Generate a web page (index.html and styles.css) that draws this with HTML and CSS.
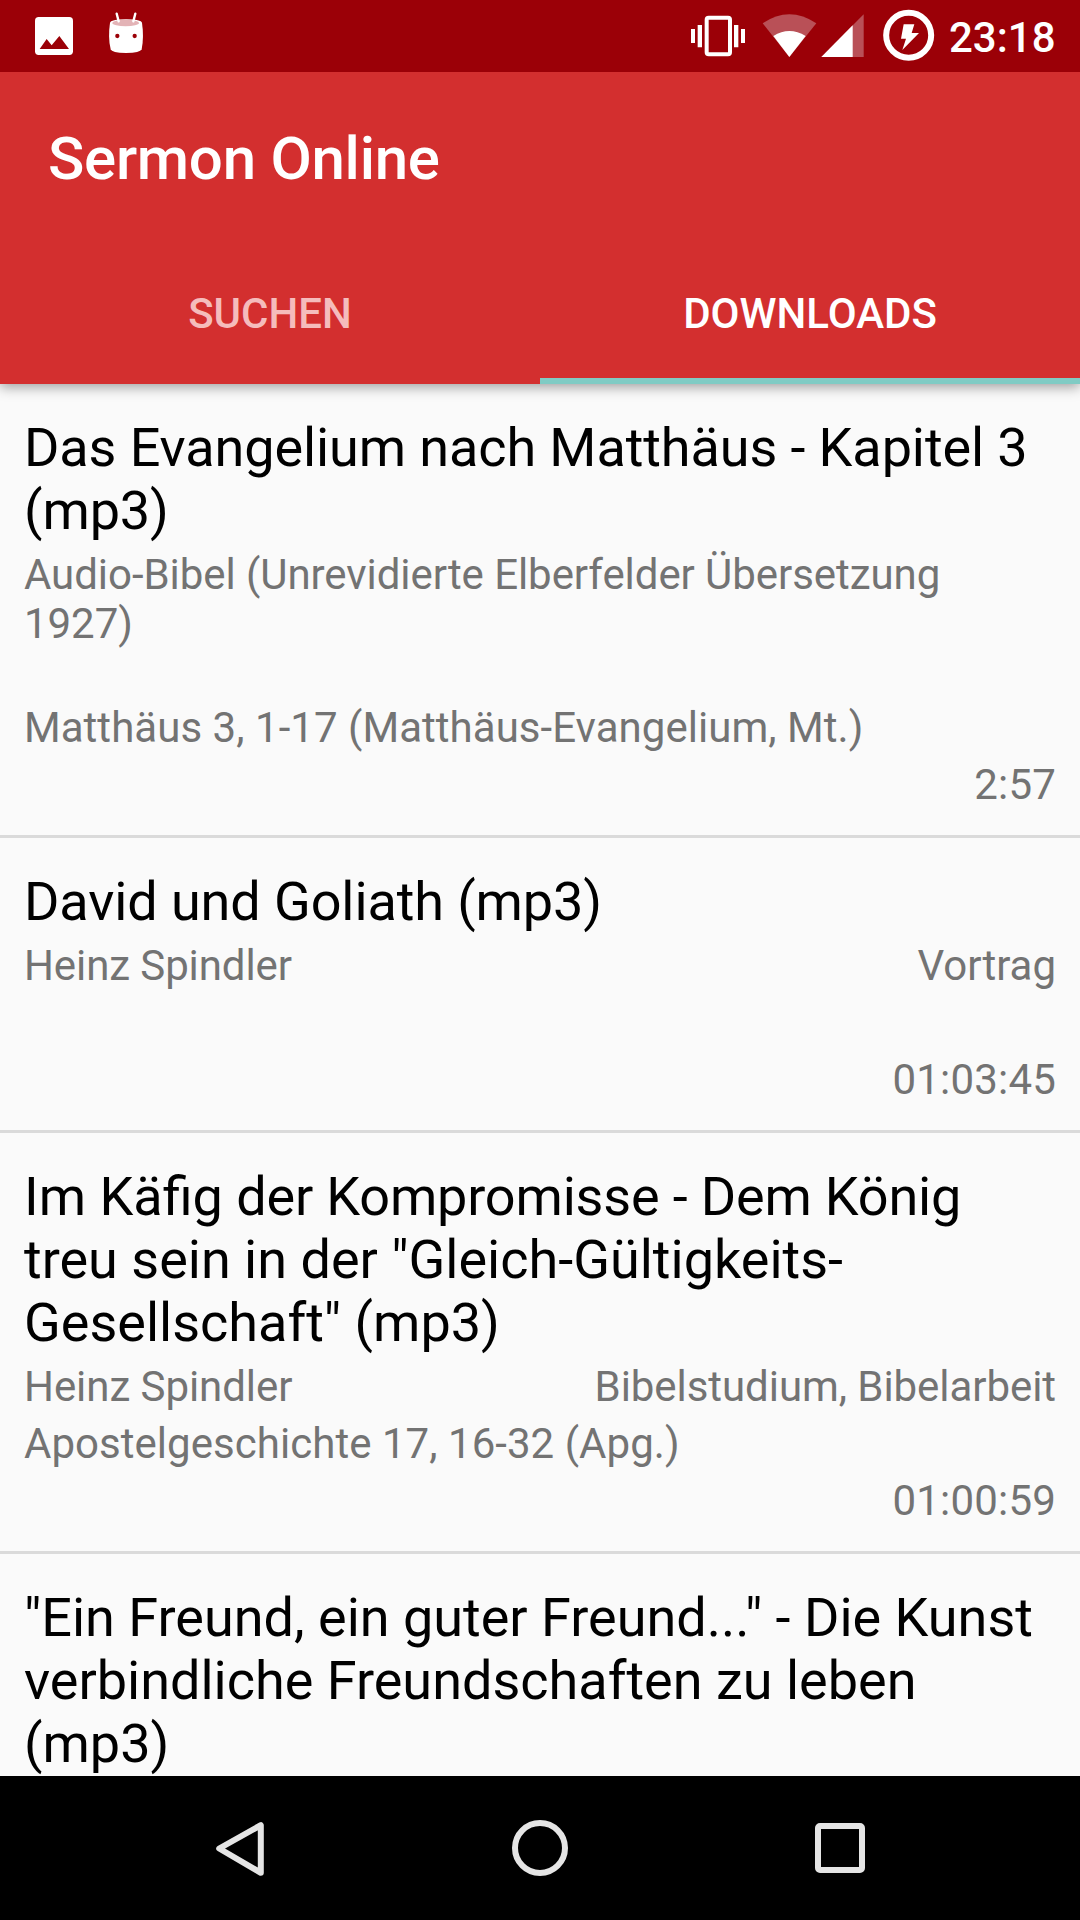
FILE: index.html
```html
<!DOCTYPE html>
<html lang="de">
<head>
<meta charset="utf-8">
<title>Sermon Online</title>
<link rel="stylesheet" href="styles.css">
</head>
<body>
<div class="screen">
  <div class="status-bar">
    <svg class="status-icons" width="160" height="72" viewBox="0 0 480 216">
      <rect x="105" y="51" width="114" height="114" rx="11" fill="#fff"/>
      <path d="M119 147L140 117L155 136L178 108L207 147Z" fill="#9b0007"/>
      <path d="M330 69C326 94 326 124 332 148Q335 159 378 159Q421 159 425 148C430 124 430 94 426 69Q424 58 378 58Q332 58 330 69Z" fill="#fff"/>
      <ellipse cx="377" cy="69" rx="40" ry="10" fill="#e3b3b6"/>
      <path d="M350 41L356 64M406 41L400 64" stroke="#fff" stroke-width="7" stroke-linecap="round"/>
      <circle cx="352" cy="108" r="6.5" fill="#9b0007"/>
      <circle cx="404" cy="108" r="6.5" fill="#9b0007"/>
    </svg>
    <svg class="status-icons" width="270" height="72" viewBox="0 0 810 216">
      <rect x="110" y="53" width="70" height="110" rx="6" fill="none" stroke="#fff" stroke-width="12"/>
      <path d="M63 87h12v42h-12zM83 75h13v67h-13zM192 75h13v67h-13zM213 87h12v42h-12z" fill="#fff"/>
      <path d="M278 70Q358 16 439 70L358 171Z" fill="#b95057"/>
      <path d="M310 108Q358 78 407 108L358 171Z" fill="#fff"/>
      <path d="M581 43V171H454Z" fill="#b95057"/>
      <path d="M548 76V171H454Z" fill="#fff"/>
      <circle cx="716" cy="106" r="67.500" fill="none" stroke="#fff" stroke-width="18"/>
      <path d="M701 73H733L725 99H747L697 150L708 116H693Z" fill="#fff"/>
    </svg>
    <span class="clock">23:18</span>
  </div>

  <header class="app-bar">
    <h1 class="app-title">Sermon Online</h1>
    <nav class="tabs">
      <div class="tab">SUCHEN</div>
      <div class="tab tab-active">DOWNLOADS</div>
    </nav>
  </header>

  <main class="list">
    <article class="item">
      <h2 class="title tight">Das Evangelium nach Matthäus - Kapitel 3 (mp3)</h2>
      <div class="row row-tall tight"><span>Audio-Bibel (Unrevidierte Elberfelder Übersetzung 1927)</span></div>
      <div class="row reference">Matthäus 3, 1-17 (Matthäus-Evangelium, Mt.)</div>
      <div class="row time">2:57</div>
    </article>
    <article class="item">
      <h2 class="title tight">David und Goliath (mp3)</h2>
      <div class="row"><span class="tight">Heinz Spindler</span><span>Vortrag</span></div>
      <div class="row"></div>
      <div class="row time">01:03:45</div>
    </article>
    <article class="item">
      <h2 class="title">Im Käfig<span class="tighter"> der Kompromisse - Dem König</span> treu sein in der "Gleich-Gültigkeits-Gesellschaft" (mp3)</h2>
      <div class="row tight"><span>Heinz Spindler</span><span>Bibelstudium, Bibelarbeit</span></div>
      <div class="row reference">Apostelgeschichte 17, 16-32 (Apg.)</div>
      <div class="row time">01:00:59</div>
    </article>
    <article class="item">
      <h2 class="title">"Ein Freund, ein guter Freund..." - Die Kunst verbindliche Freundschaften zu leben (mp3)</h2>
    </article>
  </main>

  <footer class="nav-bar">
    <svg width="60" height="60" viewBox="0 0 60 60"><path d="M50.800 5.200V52.800L9.200 28.500Z"/></svg>
    <svg width="60" height="60" viewBox="0 0 60 60"><circle cx="30" cy="28" r="25"/></svg>
    <svg width="60" height="60" viewBox="0 0 60 60"><rect x="8" y="6" width="44" height="44" rx="2"/></svg>
  </footer>
</div>
</body>
</html>
```
FILE: styles.css
```css
* {
  box-sizing: border-box;
}

body {
  margin: 0;
  background: #fafafa;
  font-family: Roboto, sans-serif;
}

.screen {
  display: flex;
  flex-direction: column;
  width: 1080px;
  height: 1920px;
  overflow: hidden;
}

.status-bar {
  flex: none;
  position: relative;
  z-index: 2;
  display: flex;
  height: 72px;
  background: #9b0007;
}

.status-icons {
  flex: none;
}

.status-icons + .status-icons {
  margin-left: 510px;
}

.clock {
  margin-left: 9px;
  color: #fff;
  font-size: 42px;
  font-weight: 500;
  line-height: 75px;
}

.app-bar {
  flex: none;
  position: relative;
  z-index: 1;
  height: 312px;
  background: #d32f2f;
  color: #fff;
  box-shadow: 0 3px 12px rgba(0, 0, 0, 0.38);
}

.app-title {
  margin: 0;
  padding-left: 48px;
  font-size: 60px;
  font-weight: 500;
  letter-spacing: -0.27px;
  line-height: 174px;
  height: 168px;
}

.tabs {
  display: grid;
  grid-template-columns: 1fr 1fr;
  height: 144px;
}

.tab {
  padding-top: 49px;
  color: #f5bcbc;
  font-size: 42px;
  font-weight: 500;
  line-height: 49px;
  text-align: center;
}

.tab-active {
  border-bottom: 6px solid #80cbc4;
  color: #fff;
}

.list {
  flex: 1;
  min-height: 0;
  overflow: hidden;
}

.item {
  padding: 32px 24px 18px;
  border-bottom: 3px solid #dadada;
}

.item:last-child {
  padding-bottom: 0;
  border-bottom: 0;
}

.title {
  margin: 0 0 8px;
  color: #000;
  font-size: 54px;
  font-weight: 400;
  line-height: 63px;
}

.item:last-child .title {
  margin-bottom: 0;
}

.row {
  display: flex;
  justify-content: space-between;
  height: 57px;
  color: #737373;
  font-size: 42px;
  line-height: 49px;
}

.row-tall {
  height: 153px;
}

.tight {
  letter-spacing: -0.1px;
}

.tighter {
  letter-spacing: -0.17px;
}

.row.tight {
  letter-spacing: -0.06px;
}

.reference {
  letter-spacing: 0.04px;
}

.time {
  justify-content: flex-end;
  letter-spacing: 0.2px;
}

.nav-bar {
  flex: none;
  position: relative;
  display: flex;
  justify-content: center;
  gap: 240px;
  height: 144px;
  padding-top: 44px;
  background: #000;
  fill: none;
  stroke: #e5e5e5;
  stroke-width: 6px;
  stroke-linejoin: round;
}
```
